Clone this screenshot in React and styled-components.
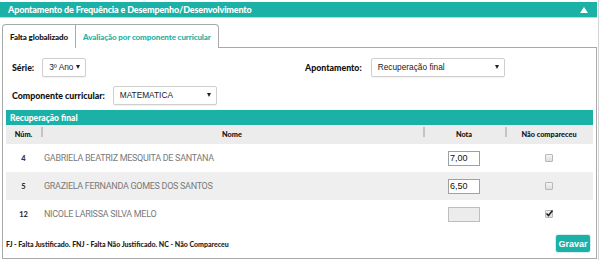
import React from "react";
import styled, { createGlobalStyle } from "styled-components";

const TEAL = "#1bb1a6";

const GlobalStyle = createGlobalStyle`
  html, body { margin: 0; padding: 0; background: #fff; }
  body { font-family: "Liberation Sans", Arial, sans-serif; }
  * { box-sizing: border-box; }
`;

const Page = styled.div`
  width: 599px;
  height: 260px;
  border-right: 1px solid #d4d4d4;
  padding-top: 2px;
`;

const TitleBar = styled.div`
  width: 597px;
  height: 16px;
  background: ${TEAL};
  border-bottom: 1px solid #a9e2dd;
  display: flex;
  align-items: center;
  justify-content: space-between;
  padding: 0 8px 0 8px;
  color: #fff;
  font-family: "Lato", sans-serif;
  font-weight: 900;
  font-size: 9px;
  letter-spacing: -0.15px;
`;

const UpArrow = styled.span`
  width: 0;
  height: 0;
  border-left: 4px solid transparent;
  border-right: 4px solid transparent;
  border-bottom: 6px solid #fff;
  margin-right: 1px;
`;

const Panel = styled.div`
  margin: 6px 0 0 2px;
  width: 595px;
`;

const TabsRow = styled.div`
  display: flex;
  height: 24px;
`;

const Tab = styled.div`
  border: 1px solid #a9a9a9;
  border-bottom: none;
  border-left: ${(p) => (p.$first ? "1px solid #a9a9a9" : "none")};
  border-radius: ${(p) => (p.$first ? "4px 0 0 0" : "0 4px 0 0")};
  padding: 0 7px;
  display: flex;
  align-items: center;
  font-family: "Lato", sans-serif;
  font-weight: 900;
  font-size: 8px;
  letter-spacing: -0.1px;
  color: ${(p) => (p.$active ? TEAL : "#111")};
  background: #fff;
`;

const TabFill = styled.div`
  flex: 1;
  border-bottom: 1px solid #a9a9a9;
`;

const Body = styled.div`
  border: 1px solid #a9a9a9;
  border-top: none;
  height: 211px;
  padding: 9px 3px 0 3px;
  display: flex;
  flex-direction: column;
`;

const FormGrid = styled.div`
  display: grid;
  grid-template-columns: 293px 1fr;
  row-gap: 8px;
  padding-left: 6px;
`;

const Field = styled.div`
  display: flex;
  align-items: center;
  gap: ${(p) => p.$gap || 8}px;
  height: 20px;
`;

const Label = styled.span`
  font-family: "Lato", sans-serif;
  font-weight: 900;
  font-size: 8.8px;
  color: #111;
`;

const Select = styled.div`
  width: ${(p) => p.$w}px;
  height: 19px;
  border: 1px solid #cfcfcf;
  border-radius: 2px;
  background: #fff;
  display: flex;
  align-items: center;
  justify-content: space-between;
  padding: 0 5px 0 6px;
  font-family: "Liberation Sans", Arial, sans-serif;
  font-size: 8.3px;
  color: #222;
  box-shadow: 0 1px 1px rgba(0,0,0,0.06);
`;

const Caret = styled.span`
  width: 0;
  height: 0;
  border-left: 2.5px solid transparent;
  border-right: 2.5px solid transparent;
  border-top: 4px solid #222;
`;

const Table = styled.div`
  margin-top: 5px;
  display: flex;
  flex-direction: column;
`;

const TableTitle = styled.div`
  height: 15px;
  background: ${TEAL};
  color: #fff;
  font-family: "Lato", sans-serif;
  font-weight: 900;
  font-size: 8.5px;
  display: flex;
  align-items: center;
  padding-left: 4px;
`;

const cols = "35px 382px 82px 1fr";

const HeadRow = styled.div`
  display: grid;
  grid-template-columns: ${cols};
  height: 19px;
  background: #ececec;
  align-items: center;
`;

const HeadCell = styled.div`
  position: relative;
  text-align: center;
  font-family: "Lato", sans-serif;
  font-weight: 900;
  font-size: 7.3px;
  color: #111;
  ${(p) =>
    p.$sep &&
    `&::before { content: ""; position: absolute; left: 0; top: -3px; width: 2px; height: 10px; background: #c4c4c4; }`}
`;

const Row = styled.div`
  display: grid;
  grid-template-columns: ${cols};
  height: 28px;
  align-items: center;
  background: ${(p) => (p.$alt ? "#efefef" : "#fff")};
`;

const Num = styled.div`
  text-align: center;
  font-family: "Lato", sans-serif;
  font-weight: 900;
  font-size: 7.5px;
  color: #333;
`;

const Name = styled.div`
  padding-left: 3px;
  font-family: "Roboto", sans-serif;
  font-size: 9px;
  letter-spacing: -0.3px;
  color: #7a7a7a;
`;

const Center = styled.div`
  display: flex;
  justify-content: center;
`;

const NoteInput = styled.div`
  width: 32px;
  height: 15px;
  border: 1px solid ${(p) => (p.$disabled ? "#bdbdbd" : "#a0a0a0")};
  background: ${(p) => (p.$disabled ? "#ececec" : "#fff")};
  font-family: "Liberation Sans", Arial, sans-serif;
  font-size: 9px;
  color: #111;
  padding-left: 1px;
  display: flex;
  align-items: center;
`;

const Check = styled.div`
  width: 8px;
  height: 8px;
  border: 1px solid #b8b8b8;
  border-radius: 1px;
  background: linear-gradient(#f4f4f4, #dedede);
  position: relative;
  margin-right: 1px;
`;

const Tick = styled.svg`
  position: absolute;
  left: -1px;
  top: -2px;
`;

const Footer = styled.div`
  display: flex;
  align-items: center;
  justify-content: space-between;
  margin-top: 7px;
  padding-right: 3px;
`;

const Legend = styled.span`
  font-family: "Lato", sans-serif;
  font-weight: 900;
  font-size: 7px;
  color: #222;
`;

const Button = styled.button`
  height: 17px;
  width: 34px;
  border: none;
  border-radius: 2px;
  background: ${TEAL};
  color: #fff;
  font-family: "Liberation Sans", Arial, sans-serif;
  font-weight: 700;
  font-size: 9px;
  padding: 0;
  box-shadow: 0 0 0 1px #d6efec;
`;

const students = [
  { n: 4, name: "GABRIELA BEATRIZ MESQUITA DE SANTANA", nota: "7,00" },
  { n: 5, name: "GRAZIELA FERNANDA GOMES DOS SANTOS", nota: "6,50" },
  { n: 12, name: "NICOLE LARISSA SILVA MELO", nota: "", absent: true },
];

export default function App() {
  return (
    <>
      <GlobalStyle />
      <Page>
        <TitleBar>
          <span>Apontamento de Frequência e Desempenho/Desenvolvimento</span>
          <UpArrow />
        </TitleBar>
        <Panel>
          <TabsRow>
            <Tab $first>Falta globalizado</Tab>
            <Tab $active>Avaliação por componente curricular</Tab>
            <TabFill />
          </TabsRow>
          <Body>
            <FormGrid>
              <Field>
                <Label>Série:</Label>
                <Select $w={44}>
                  <span>3º Ano</span>
                  <Caret />
                </Select>
              </Field>
              <Field $gap={9}>
                <Label>Apontamento:</Label>
                <Select $w={134}>
                  <span>Recuperação final</span>
                  <Caret />
                </Select>
              </Field>
              <Field $gap={8}>
                <Label>Componente curricular:</Label>
                <Select $w={104}>
                  <span>MATEMATICA</span>
                  <Caret />
                </Select>
              </Field>
            </FormGrid>
            <Table>
              <TableTitle>Recuperação final</TableTitle>
              <HeadRow>
                <HeadCell>Núm.</HeadCell>
                <HeadCell $sep>Nome</HeadCell>
                <HeadCell $sep>Nota</HeadCell>
                <HeadCell $sep>Não compareceu</HeadCell>
              </HeadRow>
              {students.map((s, i) => (
                <Row key={s.n} $alt={i % 2 === 1}>
                  <Num>{s.n}</Num>
                  <Name>{s.name}</Name>
                  <Center>
                    <NoteInput $disabled={s.absent}>{s.nota}</NoteInput>
                  </Center>
                  <Center>
                    <Check>
                      {s.absent && (
                        <Tick width="9" height="9" viewBox="0 0 9 9">
                          <path d="M1.5 4.5 L3.5 6.5 L7.5 1.5" fill="none" stroke="#222" strokeWidth="1.6" />
                        </Tick>
                      )}
                    </Check>
                  </Center>
                </Row>
              ))}
            </Table>
            <Footer>
              <Legend>FJ - Falta Justificado. FNJ - Falta Não Justificado. NC - Não Compareceu</Legend>
              <Button>Gravar</Button>
            </Footer>
          </Body>
        </Panel>
      </Page>
    </>
  );
}
